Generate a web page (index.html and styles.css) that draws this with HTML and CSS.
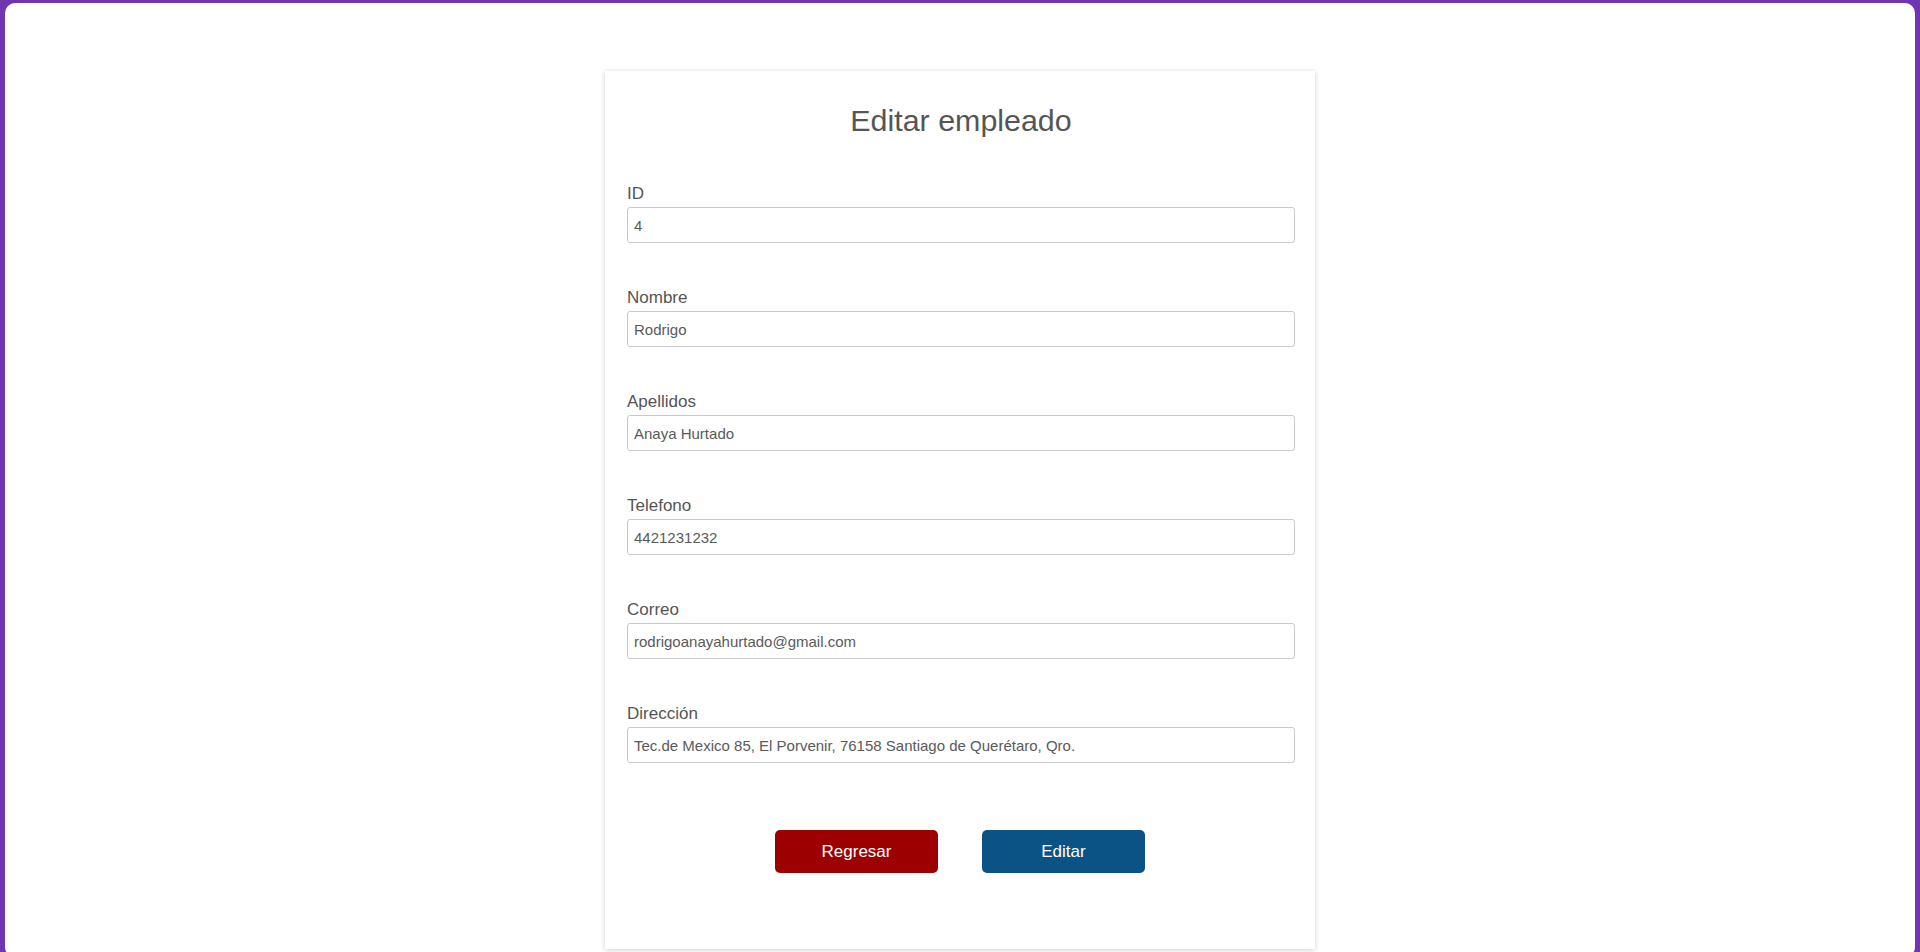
FILE: index.html
```html
<!DOCTYPE html>
<html lang="es">
<head>
<meta charset="utf-8">
<title>Editar empleado</title>
<link rel="stylesheet" href="styles.css">
</head>
<body>
<div class="frame">
  <div class="card">
    <h1 class="title">Editar empleado</h1>
    <form class="form">
      <div class="field">
        <label class="label" for="id">ID</label>
        <input class="input" id="id" type="text" value="4">
      </div>
      <div class="field">
        <label class="label" for="nombre">Nombre</label>
        <input class="input" id="nombre" type="text" value="Rodrigo">
      </div>
      <div class="field">
        <label class="label" for="apellidos">Apellidos</label>
        <input class="input" id="apellidos" type="text" value="Anaya Hurtado">
      </div>
      <div class="field">
        <label class="label" for="telefono">Telefono</label>
        <input class="input" id="telefono" type="text" value="4421231232">
      </div>
      <div class="field">
        <label class="label" for="correo">Correo</label>
        <input class="input" id="correo" type="text" value="rodrigoanayahurtado@gmail.com">
      </div>
      <div class="field">
        <label class="label" for="direccion">Dirección</label>
        <input class="input" id="direccion" type="text" value="Tec.de Mexico 85, El Porvenir, 76158 Santiago de Querétaro, Qro.">
      </div>
      <div class="actions">
        <button class="btn btn-back" type="button">Regresar</button>
        <button class="btn btn-edit" type="button">Editar</button>
      </div>
    </form>
  </div>
</div>
</body>
</html>
```
FILE: styles.css
```css
html, body {
  margin: 0;
  padding: 0;
  height: 100%;
  overflow: hidden;
}
body {
  background: #7035b0;
  font-family: "Liberation Sans", Arial, sans-serif;
}
.frame {
  margin: 3px 5px 0 5px;
  height: 954px;
  background: #ffffff;
  border-radius: 10px;
  display: flex;
  flex-direction: column;
  align-items: center;
  box-sizing: border-box;
  padding-top: 68px;
}
.card {
  width: 710px;
  box-sizing: border-box;
  background: #ffffff;
  box-shadow: 0 1px 5px rgba(0, 0, 0, 0.2);
  padding: 32px 20px 76px 22px;
}
.title {
  margin: 0 0 47px 0;
  font-size: 30.4px;
  line-height: 34px;
  font-weight: normal;
  text-align: center;
  color: #555555;
}
.form {
  display: flex;
  flex-direction: column;
  gap: 45px;
}
.field {
  display: flex;
  flex-direction: column;
  gap: 3px;
}
.label {
  font-size: 17px;
  line-height: 20px;
  color: #555555;
}
.input {
  height: 36px;
  box-sizing: border-box;
  border: 1px solid #c9c9c9;
  border-radius: 3px;
  padding: 0 6px;
  font-family: "Liberation Sans", Arial, sans-serif;
  font-size: 15px;
  color: #5a5a5a;
  background: #ffffff;
  outline: none;
}
.actions {
  display: flex;
  justify-content: center;
  gap: 44px;
  margin: 22px 0 0 -2px;
}
.btn {
  width: 163px;
  height: 43px;
  border: none;
  border-radius: 5px;
  color: #ffffff;
  font-family: "Liberation Sans", Arial, sans-serif;
  font-size: 17px;
  cursor: pointer;
}
.btn-back {
  background: #9c0000;
}
.btn-edit {
  background: #0c5385;
}
```
